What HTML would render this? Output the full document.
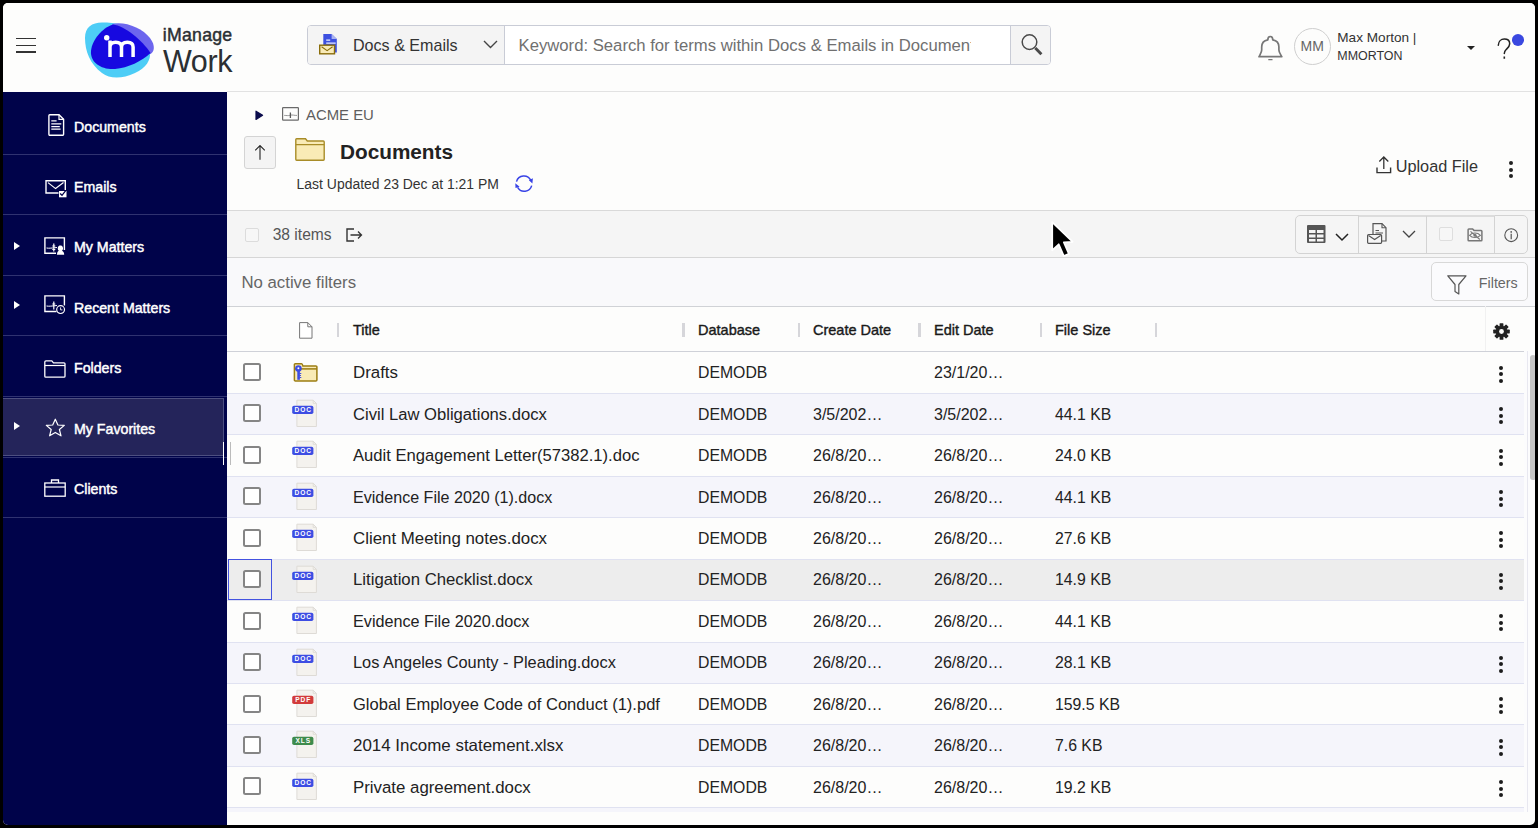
<!DOCTYPE html>
<html><head><meta charset="utf-8">
<style>
*{box-sizing:border-box;margin:0;padding:0}
html,body{width:1538px;height:828px;overflow:hidden;background:#000}
body{font-family:"Liberation Sans",sans-serif;color:#222;position:relative}
#frame{position:absolute;left:3px;top:3px;width:1532px;height:822px;border-radius:5px;overflow:hidden;background:#fdfdfc}
.a{position:absolute}
.t{position:absolute;white-space:nowrap;line-height:1}
svg{position:absolute;overflow:visible}
/* sidebar */
#side{position:absolute;left:0;top:89px;width:224px;height:740px;background:#00034a}
.sep{position:absolute;left:0;width:224px;height:1px;background:#2f3270}
.si{position:absolute;left:71px;color:#fff;font-size:14.2px;-webkit-text-stroke:0.45px #fff;line-height:1}
.tri{position:absolute;left:11px;width:0;height:0;border-top:4.5px solid transparent;border-bottom:4.5px solid transparent;border-left:6px solid #fff}
/* table */
.row{position:absolute;left:224px;width:1297px;height:41.45px}
.row.alt{background:#f5f5fb}
.rb{position:absolute;left:224px;width:1297px;height:1px;background:#e0e2f1}
.cb{position:absolute;left:16px;top:11.6px;width:18px;height:18px;border:2px solid #858585;border-radius:2.5px;background:#fff}
.cell{position:absolute;top:0.8px;line-height:41.45px;white-space:nowrap;font-size:16px;color:#222}
.kb{position:absolute;left:1272px;top:14.3px;width:4px}
.kb i{display:block;width:4px;height:4px;border-radius:50%;background:#1c1c1c;margin-bottom:2.5px}
.hsep{position:absolute;top:17px;width:2.5px;height:14px;background:#d6d6da}
.hh{position:absolute;top:0;line-height:45px;font-weight:bold;font-size:14px;color:#1a1a1a;white-space:nowrap}
</style></head><body>
<div id="frame">
<!-- HEADER -->
<div class="a" style="left:0;top:0;width:1532px;height:89px;background:#fdfdfc"></div>
<div class="a" style="left:224px;top:88px;width:1308px;height:1px;background:#e2e2e2"></div>
<!-- hamburger -->
<div class="a" style="left:12.5px;top:34.8px;width:20.5px;height:1.6px;background:#333"></div>
<div class="a" style="left:12.5px;top:41.5px;width:20.5px;height:1.6px;background:#333"></div>
<div class="a" style="left:12.5px;top:48.2px;width:20.5px;height:1.6px;background:#333"></div>

<!-- logo -->
<svg style="left:77px;top:15px" width="80" height="64" viewBox="0 0 80 64">
 <path d="M22,4.5 C12,4.5 5,9 5,20 C5,33 10,46 22,55 C30,61 42,61 55,55 C66,50 71,42 70,34 L60,14 C50,7 35,4.5 22,4.5 Z" fill="#4dcdf6"/>
 <path d="M32,6 C45,3 62,10 70,20 C76,28 74,34 70.5,36 L45,30 Z" fill="#6d66ee"/>
 <path d="M33,6.5 C22,10 12,22 11,33 C10,45 22,52 35,51 C48,50 62,43 70.5,35 C62,22 45,8 33,6.5 Z" fill="#1709e0"/>
 <circle cx="26.7" cy="19.7" r="2.7" fill="#fff"/>
 <path d="M30,39 V29 C30,25.6 32.4,24.2 35.7,24.2 C39,24.2 41.5,25.6 41.5,29 V39 M41.5,29 C41.5,25.6 44,24.2 47.3,24.2 C50.6,24.2 53.1,25.6 53.1,29 V39 M30,22.6 V39" fill="none" stroke="#fff" stroke-width="3.5"/>
</svg>
<div class="t" style="left:159.8px;top:23.9px;font-size:17.7px;color:#2b2f33;-webkit-text-stroke:0.45px #2b2f33;letter-spacing:0.25px">iManage</div>
<div class="t" style="left:160px;top:43.4px;font-size:30.5px;color:#2b2f33;letter-spacing:-0.4px">Work</div>

<!-- search -->
<div class="a" style="left:304px;top:22px;width:743.5px;height:40px;border:1px solid #c9ccd6;border-radius:4px;background:#fff;overflow:hidden">
  <div class="a" style="left:0;top:0;width:197px;height:40px;background:#f4f4f4;border-right:1px solid #c9ccd6"></div>
  <div class="a" style="left:702.4px;top:0;width:41px;height:40px;background:#f4f4f4;border-left:1px solid #c9ccd6"></div>
</div>
<div class="t" style="left:350px;top:33.7px;font-size:16.1px;color:#333">Docs &amp; Emails</div>
<div class="t" style="left:515.5px;top:35px;font-size:16.7px;color:#707070;width:452px;overflow:hidden">Keyword: Search for terms within Docs &amp; Emails in Documents</div>

<!-- right header -->
<div class="t" style="left:1297.6px;top:35.85px;font-size:14px;color:#666">MM</div>
<div class="a" style="left:1290.9px;top:25.1px;width:37px;height:37px;border-radius:50%;border:1px solid #cfcfcf"></div>
<div class="t" style="left:1334.3px;top:27.5px;font-size:13.6px;color:#333">Max Morton |</div>
<div class="t" style="left:1334.3px;top:47.2px;font-size:12.45px;color:#333">MMORTON</div>
<div class="a" style="left:1464px;top:42.8px;width:0;height:0;border-left:4px solid transparent;border-right:4px solid transparent;border-top:4.2px solid #222"></div>
<svg style="left:1487px;top:27px" width="40" height="32" viewBox="0 0 40 32"><path d="M8.3,15.3 C8.5,11.5 11,9.1 14.3,9.1 C17.5,9.1 19.7,11 19.7,13.8 C19.7,16.5 17.8,18 16.2,19.5 C14.8,20.8 14.3,22 14.3,23.5" fill="none" stroke="#222" stroke-width="1.5" stroke-linecap="round"/><path d="M14.3,26.6 V28.8" stroke="#222" stroke-width="1.6"/></svg>
<div class="a" style="left:1509px;top:31px;width:12px;height:11.5px;border-radius:50%;background:#3a48e0"></div>

<!-- SIDEBAR -->
<div id="side">
  <div class="sep" style="top:62px"></div>
  <div class="sep" style="top:122px"></div>
  <div class="sep" style="top:182.6px"></div>
  <div class="sep" style="top:243px"></div>
  <div class="sep" style="top:303.6px"></div>
  <div class="sep" style="top:364.6px"></div>
  <div class="sep" style="top:425px"></div>
  <div class="a" style="left:0;top:306px;width:221px;height:57.5px;background:#24245a;border:1px solid #4d4f80;border-left:none"></div>
  <div class="si" style="top:27.62px">Documents</div>
  <div class="si" style="top:88.12px">Emails</div>
  <div class="si" style="top:148.12px">My Matters</div>
  <div class="si" style="top:209.12px">Recent Matters</div>
  <div class="si" style="top:269.12px">Folders</div>
  <div class="si" style="top:330.12px">My Favorites</div>
  <div class="si" style="top:390.12px">Clients</div>
  <div class="tri" style="top:149.7px"></div>
  <div class="tri" style="top:209.2px"></div>
  <div class="tri" style="top:330.4px"></div>
</div>

<!-- CONTENT -->
<!-- breadcrumb -->
<svg style="left:251.5px;top:106.5px" width="9" height="11" viewBox="0 0 9 11"><path d="M1,1.2 L7.6,5.3 L1,9.4 Z" fill="#0b0c4c" stroke="#0b0c4c" stroke-width="1.2" stroke-linejoin="round"/></svg>
<svg style="left:278.5px;top:104px" width="18" height="14" viewBox="0 0 18 14"><rect x="0.6" y="0.6" width="15.8" height="12.6" rx="0.6" fill="none" stroke="#6a6a6a" stroke-width="1.2"/><path d="M2.2,8.4 C4.5,8.4 6,9 8.2,8.2 C10.5,7.6 12.5,8.6 15,8.4" fill="none" stroke="#8a8a8a" stroke-width="0.9"/><path d="M8.4,5.4 V11" stroke="#5a5a5a" stroke-width="1.3"/></svg>
<div class="t" style="left:303px;top:105.1px;font-size:14.9px;color:#5e5e5e">ACME EU</div>
<!-- up button -->
<div class="a" style="left:241px;top:133px;width:31.5px;height:32.6px;background:#f4f4f4;border:1px solid #d4d4d4;border-radius:3px"></div>
<svg style="left:249px;top:141px" width="16" height="17" viewBox="0 0 16 17"><path d="M8,1.6 V15.8 M3.2,6.4 L8,1.6 L12.8,6.4" fill="none" stroke="#2a2a2a" stroke-width="1.15"/></svg>
<!-- folder -->
<svg style="left:292px;top:135px" width="30" height="23" viewBox="0 0 30 23"><path d="M0.8,3.5 V1.6 C0.8,1 1.1,0.8 1.6,0.8 H10.5 L12.3,3 H28.3 C28.9,3 29.2,3.3 29.2,3.9 V21.3 C29.2,21.9 28.9,22.2 28.3,22.2 H1.6 C1.1,22.2 0.8,21.9 0.8,21.3 Z" fill="#f9ebb6" stroke="#a88c27" stroke-width="1.4"/><path d="M0.8,6.6 H29.2" stroke="#a88c27" stroke-width="1.3"/></svg>
<div class="t" style="left:337px;top:139.4px;font-size:20.75px;font-weight:bold;color:#222">Documents</div>
<div class="t" style="left:293.6px;top:175.2px;font-size:13.95px;color:#333">Last Updated 23 Dec at 1:21 PM</div>
<!-- refresh -->
<svg style="left:511.6px;top:172px" width="20" height="18" viewBox="0 0 20 18"><path d="M1.5,6.6 A7.7,7.7 0 0 1 15.8,5.3 M16.7,10.6 A7.7,7.7 0 0 1 2.6,12.4" fill="none" stroke="#3843e6" stroke-width="1.5"/><path d="M13.9,5.2 L17.9,3.2 L17.4,8.4 Z M0.3,8.3 L0.5,13 L4.6,11.7 Z" fill="#3843e6"/></svg>
<!-- upload -->
<svg style="left:1373px;top:153px" width="16" height="18" viewBox="0 0 16 18"><path d="M7.8,1 V13 M3.3,5.5 L7.8,1 L12.3,5.5" fill="none" stroke="#333" stroke-width="1.3"/><path d="M1,11.5 V16.6 H14.6 V11.5" fill="none" stroke="#333" stroke-width="1.4"/></svg>
<div class="t" style="left:1392.7px;top:155.2px;font-size:16.3px;color:#333">Upload File</div>
<div class="a" style="left:1506px;top:158px;width:4px"><div style="width:4px;height:4px;border-radius:50%;background:#222;margin-bottom:2.6px"></div><div style="width:4px;height:4px;border-radius:50%;background:#222;margin-bottom:2.6px"></div><div style="width:4px;height:4px;border-radius:50%;background:#222"></div></div>

<!-- toolbar -->
<div class="a" style="left:224px;top:206.5px;width:1308px;height:48px;background:#f5f5f5;border-top:1px solid #d9d9d9;border-bottom:1px solid #d6d6d6"></div>
<div class="a" style="left:224px;top:254.5px;width:1308px;height:49px;background:#f9f9fb;border-bottom:1px solid #d0d2d6"></div>
<div class="a" style="left:242.3px;top:225px;width:13.6px;height:13.6px;border:1px solid #dcdcdc;border-radius:2px;background:#f7f7f7"></div>
<div class="t" style="left:269.7px;top:223.8px;font-size:15.6px;color:#555">38 items</div>
<svg style="left:342.6px;top:225px" width="17" height="14" viewBox="0 0 17 14"><path d="M8,1 H1 V13 H8" fill="none" stroke="#333" stroke-width="1.4"/><path d="M4.5,7 H15.5 M12,3.5 L15.5,7 L12,10.5" fill="none" stroke="#333" stroke-width="1.3"/></svg>
<!-- button group -->
<div class="a" style="left:1292.4px;top:212.4px;width:233px;height:38.2px;border:1px solid #d3d3d3;border-radius:5px"></div>
<div class="a" style="left:1355.6px;top:211.8px;width:136px;height:2px;background:#dcdcdc"></div><div class="a" style="left:1354.6px;top:213px;width:1px;height:37px;background:#d3d3d3"></div>
<div class="a" style="left:1422.7px;top:213px;width:1px;height:37px;background:#d3d3d3"></div>
<div class="a" style="left:1491.4px;top:213px;width:1px;height:37px;background:#d3d3d3"></div>
<svg style="left:1303.8px;top:222px" width="19" height="19" viewBox="0 0 19 19"><rect x="0" y="0" width="18.5" height="18" rx="1" fill="#555"/><rect x="2" y="5" width="6.5" height="3" fill="#f5f5f5"/><rect x="10" y="5" width="6.5" height="3" fill="#f5f5f5"/><rect x="2" y="9.5" width="6.5" height="3" fill="#f5f5f5"/><rect x="10" y="9.5" width="6.5" height="3" fill="#f5f5f5"/><rect x="2" y="14" width="6.5" height="2.5" fill="#f5f5f5"/><rect x="10" y="14" width="6.5" height="2.5" fill="#f5f5f5"/></svg>
<svg style="left:1331.9px;top:229.7px" width="14" height="8" viewBox="0 0 14 8"><path d="M1,1 L7,7 L13,1" fill="none" stroke="#222" stroke-width="1.5"/></svg>
<svg style="left:1363.9px;top:219.6px" width="20" height="21" viewBox="0 0 20 21"><path d="M6,12 V0.7 H15 L19,4.7 V18 H15" fill="none" stroke="#555" stroke-width="1.2"/><path d="M15,0.7 V4.7 H19" fill="none" stroke="#555" stroke-width="1.1"/><path d="M8.5,7.5 H12 M8.5,10 H16" stroke="#555" stroke-width="1.1"/><rect x="0.6" y="11.5" width="14" height="8.8" rx="1" fill="#f5f5f5" stroke="#555" stroke-width="1.2"/><path d="M1.5,12.5 L7.6,16.5 L13.7,12.5" fill="none" stroke="#555" stroke-width="1.1"/></svg>
<svg style="left:1398.6px;top:227px" width="14" height="8" viewBox="0 0 14 8"><path d="M1,1 L7,7 L13,1" fill="none" stroke="#444" stroke-width="1.3"/></svg>
<div class="a" style="left:1436.4px;top:223.8px;width:13.4px;height:13.8px;border:1px solid #dedede;border-radius:2px;background:#f7f7f7"></div>
<svg style="left:1463.6px;top:224.6px" width="16" height="14" viewBox="0 0 16 14"><path d="M1.9,12.7 C1.4,12.7 1.1,12.4 1.1,11.9 V1.8 C1.1,1.3 1.4,1 1.9,1 H5.6 L7,2.4 H14.1 C14.6,2.4 14.9,2.7 14.9,3.2 V11.9 C14.9,12.4 14.6,12.7 14.1,12.7 Z" fill="none" stroke="#777" stroke-width="1.5"/><path d="M2.6,7.3 C5.2,4.3 10.6,4.3 13.4,7.3 C10.6,10.2 5.2,10.2 2.6,7.3 Z" fill="none" stroke="#777" stroke-width="1.1"/><circle cx="8" cy="7.3" r="1.5" fill="#777"/><path d="M3.5,3.3 L12.8,11.5" stroke="#777" stroke-width="1.1"/></svg>
<svg style="left:1501px;top:224.5px" width="15" height="15" viewBox="0 0 15 15"><circle cx="7.2" cy="7.2" r="6.4" fill="none" stroke="#555" stroke-width="1.1"/><circle cx="7.2" cy="3.9" r="0.85" fill="#555"/><path d="M7.2,5.8 V11.2" stroke="#555" stroke-width="1.2"/></svg>
<!-- filter bar -->
<div class="t" style="left:238.4px;top:271.6px;font-size:16.8px;color:#666">No active filters</div>
<div class="a" style="left:1427.5px;top:259.4px;width:97px;height:38.2px;border:1px solid #d8d8d8;border-radius:5px;background:#fbfbfd"></div>
<svg style="left:1444px;top:271.6px" width="20" height="20" viewBox="0 0 20 20"><path d="M0.8,0.8 H19 L11.8,9.5 V19 L8,16.5 V9.5 Z" fill="none" stroke="#555" stroke-width="1.2" stroke-linejoin="round"/></svg>
<div class="t" style="left:1475.8px;top:273px;font-size:14.3px;color:#666">Filters</div>

<!-- table header -->
<svg style="left:296px;top:318.5px" width="14" height="17" viewBox="0 0 14 17"><path d="M0.6,0.6 H8.8 L13,4.8 V16.2 H0.6 Z" fill="#fff" stroke="#777" stroke-width="1"/><path d="M8.8,0.6 V4.8 H13" fill="none" stroke="#777" stroke-width="1"/></svg>
<div class="hsep" style="left:333.8px;top:320px"></div>
<div class="hsep" style="left:679.2px;top:320px"></div>
<div class="hsep" style="left:794.8px;top:320px"></div>
<div class="hsep" style="left:915.2px;top:320px"></div>
<div class="hsep" style="left:1036.5px;top:320px"></div>
<div class="hsep" style="left:1151.5px;top:320px"></div>
<div class="t" style="left:350px;top:320.1px;font-size:14.5px;color:#1a1a1a;-webkit-text-stroke:0.4px #1a1a1a">Title</div>
<div class="t" style="left:695px;top:320.1px;font-size:14.5px;color:#1a1a1a;-webkit-text-stroke:0.4px #1a1a1a">Database</div>
<div class="t" style="left:810px;top:320.1px;font-size:14.5px;color:#1a1a1a;-webkit-text-stroke:0.4px #1a1a1a">Create Date</div>
<div class="t" style="left:931px;top:320.1px;font-size:14.5px;color:#1a1a1a;-webkit-text-stroke:0.4px #1a1a1a">Edit Date</div>
<div class="t" style="left:1052px;top:320.1px;font-size:14.5px;color:#1a1a1a;-webkit-text-stroke:0.4px #1a1a1a">File Size</div>
<div class="a" style="left:1482.3px;top:303px;width:1px;height:45px;background:#f1f1f1"></div>
<svg style="left:1490px;top:319.7px" width="17" height="17" viewBox="-8.5 -8.5 17 17"><g fill="#222"><circle r="5.8"/><rect x="-1.9" y="-8.3" width="3.8" height="16.6" rx="0.6"/><rect x="-1.9" y="-8.3" width="3.8" height="16.6" rx="0.6" transform="rotate(45)"/><rect x="-1.9" y="-8.3" width="3.8" height="16.6" rx="0.6" transform="rotate(90)"/><rect x="-1.9" y="-8.3" width="3.8" height="16.6" rx="0.6" transform="rotate(135)"/></g><circle r="2.4" fill="#fdfdfc"/></svg>
<div class="a" style="left:224px;top:347.9px;width:1308px;height:1px;background:#cfd1d8"></div>

<div class="row" style="top:348.40px;">
<div class="cb"></div>
<svg style="left:65.8px;top:12px" width="25" height="19" viewBox="0 0 25 19"><path d="M1.4,16.9 V1.6 C1.4,1 1.7,0.7 2.3,0.7 H8.6 C9.2,0.7 9.5,1.2 9.9,2.9 H22.9 C23.5,2.9 23.9,3.2 23.9,3.8 V16.9 C23.9,17.5 23.5,17.9 22.9,17.9 H2.3 C1.7,17.9 1.4,17.5 1.4,16.9 Z" fill="#f9ebb6" stroke="#9c7d12" stroke-width="1.5"/><path d="M1.4,5.9 H23.9" stroke="#9c7d12" stroke-width="1.5"/><circle cx="5.4" cy="5.6" r="3.3" fill="#3d4de3"/><circle cx="5.4" cy="5.3" r="1" fill="#fff"/><path d="M5.6,8 V16.8" stroke="#3d4de3" stroke-width="2.6"/><path d="M6.5,10.5 H8.3 M6.5,12.5 H8 M6.5,14.5 H8.3" stroke="#3d4de3" stroke-width="1.1"/></svg>
<div class="cell" style="left:126px;font-size:16.87px">Drafts</div>
<div class="cell" style="left:471px;font-size:15.8px">DEMODB</div>
<div class="cell" style="left:707px;font-size:16px">23/1/20…</div>
<div class="kb"><i></i><i></i><i></i></div>
</div>
<div class="row" style="top:389.85px;background:#f5f5fb">
<div class="cb"></div>
<svg style="left:64.8px;top:7px" width="26" height="27" viewBox="0 0 26 27"><path d="M4.9,0.2 H21.2 L24.4,3.4 V26.5 H4.9 Z" fill="#f4f2ee" stroke="#dedbd6" stroke-width="1"/><path d="M21.2,0.2 V3.4 H24.4" fill="none" stroke="#dedbd6" stroke-width="0.9"/><rect x="0.2" y="5.7" width="21.2" height="8.4" rx="1.8" fill="#3d4de3"/><text x="11.2" y="12.4" font-family="Liberation Sans" font-weight="bold" font-size="6.6" fill="#fff" text-anchor="middle" letter-spacing="0.9">DOC</text></svg>
<div class="cell" style="left:126px;font-size:16.62px">Civil Law Obligations.docx</div>
<div class="cell" style="left:471px;font-size:15.8px">DEMODB</div>
<div class="cell" style="left:586px;font-size:16px">3/5/202…</div>
<div class="cell" style="left:707px;font-size:16px">3/5/202…</div>
<div class="cell" style="left:828px;font-size:15.8px">44.1 KB</div>
<div class="kb"><i></i><i></i><i></i></div>
</div>
<div class="row" style="top:431.30px;">
<div class="cb"></div>
<svg style="left:64.8px;top:7px" width="26" height="27" viewBox="0 0 26 27"><path d="M4.9,0.2 H21.2 L24.4,3.4 V26.5 H4.9 Z" fill="#f4f2ee" stroke="#dedbd6" stroke-width="1"/><path d="M21.2,0.2 V3.4 H24.4" fill="none" stroke="#dedbd6" stroke-width="0.9"/><rect x="0.2" y="5.7" width="21.2" height="8.4" rx="1.8" fill="#3d4de3"/><text x="11.2" y="12.4" font-family="Liberation Sans" font-weight="bold" font-size="6.6" fill="#fff" text-anchor="middle" letter-spacing="0.9">DOC</text></svg>
<div class="cell" style="left:126px;font-size:16.64px">Audit Engagement Letter(57382.1).doc</div>
<div class="cell" style="left:471px;font-size:15.8px">DEMODB</div>
<div class="cell" style="left:586px;font-size:16px">26/8/20…</div>
<div class="cell" style="left:707px;font-size:16px">26/8/20…</div>
<div class="cell" style="left:828px;font-size:15.8px">24.0 KB</div>
<div class="kb"><i></i><i></i><i></i></div>
</div>
<div class="row" style="top:472.75px;background:#f5f5fb">
<div class="cb"></div>
<svg style="left:64.8px;top:7px" width="26" height="27" viewBox="0 0 26 27"><path d="M4.9,0.2 H21.2 L24.4,3.4 V26.5 H4.9 Z" fill="#f4f2ee" stroke="#dedbd6" stroke-width="1"/><path d="M21.2,0.2 V3.4 H24.4" fill="none" stroke="#dedbd6" stroke-width="0.9"/><rect x="0.2" y="5.7" width="21.2" height="8.4" rx="1.8" fill="#3d4de3"/><text x="11.2" y="12.4" font-family="Liberation Sans" font-weight="bold" font-size="6.6" fill="#fff" text-anchor="middle" letter-spacing="0.9">DOC</text></svg>
<div class="cell" style="left:126px;font-size:16.09px">Evidence File 2020 (1).docx</div>
<div class="cell" style="left:471px;font-size:15.8px">DEMODB</div>
<div class="cell" style="left:586px;font-size:16px">26/8/20…</div>
<div class="cell" style="left:707px;font-size:16px">26/8/20…</div>
<div class="cell" style="left:828px;font-size:15.8px">44.1 KB</div>
<div class="kb"><i></i><i></i><i></i></div>
</div>
<div class="row" style="top:514.20px;">
<div class="cb"></div>
<svg style="left:64.8px;top:7px" width="26" height="27" viewBox="0 0 26 27"><path d="M4.9,0.2 H21.2 L24.4,3.4 V26.5 H4.9 Z" fill="#f4f2ee" stroke="#dedbd6" stroke-width="1"/><path d="M21.2,0.2 V3.4 H24.4" fill="none" stroke="#dedbd6" stroke-width="0.9"/><rect x="0.2" y="5.7" width="21.2" height="8.4" rx="1.8" fill="#3d4de3"/><text x="11.2" y="12.4" font-family="Liberation Sans" font-weight="bold" font-size="6.6" fill="#fff" text-anchor="middle" letter-spacing="0.9">DOC</text></svg>
<div class="cell" style="left:126px;font-size:16.86px">Client Meeting notes.docx</div>
<div class="cell" style="left:471px;font-size:15.8px">DEMODB</div>
<div class="cell" style="left:586px;font-size:16px">26/8/20…</div>
<div class="cell" style="left:707px;font-size:16px">26/8/20…</div>
<div class="cell" style="left:828px;font-size:15.8px">27.6 KB</div>
<div class="kb"><i></i><i></i><i></i></div>
</div>
<div class="row" style="top:555.65px;background:#ededed">
<div class="cb"></div>
<svg style="left:64.8px;top:7px" width="26" height="27" viewBox="0 0 26 27"><path d="M4.9,0.2 H21.2 L24.4,3.4 V26.5 H4.9 Z" fill="#f4f2ee" stroke="#dedbd6" stroke-width="1"/><path d="M21.2,0.2 V3.4 H24.4" fill="none" stroke="#dedbd6" stroke-width="0.9"/><rect x="0.2" y="5.7" width="21.2" height="8.4" rx="1.8" fill="#3d4de3"/><text x="11.2" y="12.4" font-family="Liberation Sans" font-weight="bold" font-size="6.6" fill="#fff" text-anchor="middle" letter-spacing="0.9">DOC</text></svg>
<div class="cell" style="left:126px;font-size:16.74px">Litigation Checklist.docx</div>
<div class="cell" style="left:471px;font-size:15.8px">DEMODB</div>
<div class="cell" style="left:586px;font-size:16px">26/8/20…</div>
<div class="cell" style="left:707px;font-size:16px">26/8/20…</div>
<div class="cell" style="left:828px;font-size:15.8px">14.9 KB</div>
<div class="kb"><i></i><i></i><i></i></div>
</div>
<div class="row" style="top:597.10px;">
<div class="cb"></div>
<svg style="left:64.8px;top:7px" width="26" height="27" viewBox="0 0 26 27"><path d="M4.9,0.2 H21.2 L24.4,3.4 V26.5 H4.9 Z" fill="#f4f2ee" stroke="#dedbd6" stroke-width="1"/><path d="M21.2,0.2 V3.4 H24.4" fill="none" stroke="#dedbd6" stroke-width="0.9"/><rect x="0.2" y="5.7" width="21.2" height="8.4" rx="1.8" fill="#3d4de3"/><text x="11.2" y="12.4" font-family="Liberation Sans" font-weight="bold" font-size="6.6" fill="#fff" text-anchor="middle" letter-spacing="0.9">DOC</text></svg>
<div class="cell" style="left:126px;font-size:16.2px">Evidence File 2020.docx</div>
<div class="cell" style="left:471px;font-size:15.8px">DEMODB</div>
<div class="cell" style="left:586px;font-size:16px">26/8/20…</div>
<div class="cell" style="left:707px;font-size:16px">26/8/20…</div>
<div class="cell" style="left:828px;font-size:15.8px">44.1 KB</div>
<div class="kb"><i></i><i></i><i></i></div>
</div>
<div class="row" style="top:638.55px;background:#f5f5fb">
<div class="cb"></div>
<svg style="left:64.8px;top:7px" width="26" height="27" viewBox="0 0 26 27"><path d="M4.9,0.2 H21.2 L24.4,3.4 V26.5 H4.9 Z" fill="#f4f2ee" stroke="#dedbd6" stroke-width="1"/><path d="M21.2,0.2 V3.4 H24.4" fill="none" stroke="#dedbd6" stroke-width="0.9"/><rect x="0.2" y="5.7" width="21.2" height="8.4" rx="1.8" fill="#3d4de3"/><text x="11.2" y="12.4" font-family="Liberation Sans" font-weight="bold" font-size="6.6" fill="#fff" text-anchor="middle" letter-spacing="0.9">DOC</text></svg>
<div class="cell" style="left:126px;font-size:16.38px">Los Angeles County - Pleading.docx</div>
<div class="cell" style="left:471px;font-size:15.8px">DEMODB</div>
<div class="cell" style="left:586px;font-size:16px">26/8/20…</div>
<div class="cell" style="left:707px;font-size:16px">26/8/20…</div>
<div class="cell" style="left:828px;font-size:15.8px">28.1 KB</div>
<div class="kb"><i></i><i></i><i></i></div>
</div>
<div class="row" style="top:680.00px;">
<div class="cb"></div>
<svg style="left:64.8px;top:7px" width="26" height="27" viewBox="0 0 26 27"><path d="M4.9,0.2 H21.2 L24.4,3.4 V26.5 H4.9 Z" fill="#f4f2ee" stroke="#dedbd6" stroke-width="1"/><path d="M21.2,0.2 V3.4 H24.4" fill="none" stroke="#dedbd6" stroke-width="0.9"/><rect x="0.2" y="5.7" width="21.2" height="8.4" rx="1.8" fill="#d23b3b"/><text x="11.2" y="12.4" font-family="Liberation Sans" font-weight="bold" font-size="6.6" fill="#fff" text-anchor="middle" letter-spacing="0.9">PDF</text></svg>
<div class="cell" style="left:126px;font-size:16.54px">Global Employee Code of Conduct (1).pdf</div>
<div class="cell" style="left:471px;font-size:15.8px">DEMODB</div>
<div class="cell" style="left:586px;font-size:16px">26/8/20…</div>
<div class="cell" style="left:707px;font-size:16px">26/8/20…</div>
<div class="cell" style="left:828px;font-size:15.8px">159.5 KB</div>
<div class="kb"><i></i><i></i><i></i></div>
</div>
<div class="row" style="top:721.45px;background:#f5f5fb">
<div class="cb"></div>
<svg style="left:64.8px;top:7px" width="26" height="27" viewBox="0 0 26 27"><path d="M4.9,0.2 H21.2 L24.4,3.4 V26.5 H4.9 Z" fill="#f4f2ee" stroke="#dedbd6" stroke-width="1"/><path d="M21.2,0.2 V3.4 H24.4" fill="none" stroke="#dedbd6" stroke-width="0.9"/><rect x="0.2" y="5.7" width="21.2" height="8.4" rx="1.8" fill="#3e8b4c"/><text x="11.2" y="12.4" font-family="Liberation Sans" font-weight="bold" font-size="6.6" fill="#fff" text-anchor="middle" letter-spacing="0.9">XLS</text></svg>
<div class="cell" style="left:126px;font-size:16.92px">2014 Income statement.xlsx</div>
<div class="cell" style="left:471px;font-size:15.8px">DEMODB</div>
<div class="cell" style="left:586px;font-size:16px">26/8/20…</div>
<div class="cell" style="left:707px;font-size:16px">26/8/20…</div>
<div class="cell" style="left:828px;font-size:15.8px">7.6 KB</div>
<div class="kb"><i></i><i></i><i></i></div>
</div>
<div class="row" style="top:762.90px;">
<div class="cb"></div>
<svg style="left:64.8px;top:7px" width="26" height="27" viewBox="0 0 26 27"><path d="M4.9,0.2 H21.2 L24.4,3.4 V26.5 H4.9 Z" fill="#f4f2ee" stroke="#dedbd6" stroke-width="1"/><path d="M21.2,0.2 V3.4 H24.4" fill="none" stroke="#dedbd6" stroke-width="0.9"/><rect x="0.2" y="5.7" width="21.2" height="8.4" rx="1.8" fill="#3d4de3"/><text x="11.2" y="12.4" font-family="Liberation Sans" font-weight="bold" font-size="6.6" fill="#fff" text-anchor="middle" letter-spacing="0.9">DOC</text></svg>
<div class="cell" style="left:126px;font-size:16.84px">Private agreement.docx</div>
<div class="cell" style="left:471px;font-size:15.8px">DEMODB</div>
<div class="cell" style="left:586px;font-size:16px">26/8/20…</div>
<div class="cell" style="left:707px;font-size:16px">26/8/20…</div>
<div class="cell" style="left:828px;font-size:15.8px">19.2 KB</div>
<div class="kb"><i></i><i></i><i></i></div>
</div>
<div class="row" style="top:804.35px;height:5px;background:#f5f5fb"></div>
<div class="rb" style="top:389.85px"></div>
<div class="rb" style="top:431.30px"></div>
<div class="rb" style="top:472.75px"></div>
<div class="rb" style="top:514.20px"></div>
<div class="rb" style="top:555.65px"></div>
<div class="rb" style="top:597.10px"></div>
<div class="rb" style="top:638.55px"></div>
<div class="rb" style="top:680.00px"></div>
<div class="rb" style="top:721.45px"></div>
<div class="rb" style="top:762.90px"></div>
<div class="rb" style="top:804.35px"></div>
<!-- scrollbar -->
<div class="a" style="left:1521px;top:348.4px;width:11px;height:461px;background:#fcfcfd"></div><div class="a" style="left:1523.8px;top:348.4px;width:1px;height:461px;background:#e8e8f0"></div>
<div class="a" style="left:1526.5px;top:351.5px;width:6px;height:125px;border-radius:3px;background:#c6c6c6"></div>
<!-- litigation focus -->
<div class="a" style="left:225px;top:555.7px;width:43.6px;height:41.5px;border:1px solid #4352e0"></div>
<!-- I-beam cursor -->
<div class="a" style="left:220px;top:439px;width:1.2px;height:23px;background:#fff"></div>
<div class="a" style="left:227.2px;top:439px;width:1px;height:23px;background:#bbb"></div>
<!-- mouse pointer -->
<svg style="left:1047.3px;top:216.3px" width="24" height="40" viewBox="0 0 24 40"><path d="M2.2,3.2 V31.3 L8.7,25.3 L13.8,37 L18.9,34.8 L13.9,23.3 L22.7,22.8 Z" fill="#000" stroke="#fff" stroke-width="1.8" stroke-linejoin="round"/></svg>

<!-- header icons -->
<svg style="left:315.8px;top:31.2px" width="20" height="23" viewBox="0 0 20 23"><path d="M4.3,0 H12.6 L17.8,5 V18.5 H4.3 Z" fill="#3d50e0"/><path d="M12.6,0 V5 H17.8" fill="#a9b3f0"/><path d="M7.2,6.1 H11.2 M7.2,9.2 H16.7" stroke="#e8ebff" stroke-width="1.2"/><rect x="0.7" y="11.2" width="14.8" height="8.6" fill="#f8eab8" stroke="#8a6d0a" stroke-width="1.4"/><path d="M2.6,12.8 L8.1,16.6 L13.6,12.8" fill="none" stroke="#8a6d0a" stroke-width="1.1"/></svg>
<svg style="left:480px;top:37px" width="15" height="9" viewBox="0 0 15 9"><path d="M1,1 L7.5,7.5 L14,1" fill="none" stroke="#444" stroke-width="1.4"/></svg>
<svg style="left:1014px;top:28px" width="30" height="30" viewBox="0 0 30 30"><circle cx="12.5" cy="11.1" r="7.3" fill="none" stroke="#4a4a4a" stroke-width="1.5"/><path d="M18.3,17 L24.4,23.3" stroke="#4a4a4a" stroke-width="2.9"/></svg>
<svg style="left:1252px;top:30px" width="32" height="30" viewBox="0 0 32 30"><path d="M4,23.7 C5,21.5 6.7,19.5 6.7,17 V14 C6.7,10 9,7.6 12.8,6.9 C12.8,4.6 13.8,3.5 15.3,3.5 C16.8,3.5 17.8,4.6 17.8,6.9 C21.6,7.6 23.9,10 23.9,14 V17 C23.9,19.5 25.6,21.5 26.8,23.7 Z" fill="none" stroke="#777" stroke-width="1.7" stroke-linejoin="round"/><path d="M13.3,26.6 H17.5" stroke="#777" stroke-width="1.4"/></svg>

<!-- sidebar icons -->
<svg style="left:44.6px;top:110.5px" width="17" height="22" viewBox="0 0 17 22"><path d="M1.7,0.8 H11 L15.6,5.3 V20.3 C15.6,20.8 15.3,21.2 14.8,21.2 H1.7 C1.2,21.2 0.9,20.8 0.9,20.3 V1.7 C0.9,1.2 1.2,0.8 1.7,0.8 Z" fill="none" stroke="#fff" stroke-width="1.4"/><path d="M11,0.8 V5.3 H15.6" fill="none" stroke="#fff" stroke-width="1.2"/><path d="M3.3,6.8 H8.6 M3.3,9.9 H13.3 M3.3,12.6 H11.8 M3.3,15.2 H12.6" stroke="#fff" stroke-width="1.3"/></svg>
<svg style="left:42px;top:176.5px" width="22" height="17" viewBox="0 0 22 17"><path d="M13.5,13 H1 V0.7 H20.3 V10" fill="none" stroke="#fff" stroke-width="1.4"/><path d="M3,2.6 L10.6,8.6 L18.5,2.6" fill="none" stroke="#fff" stroke-width="1.2"/><rect x="14" y="11" width="7.5" height="6.3" fill="#fff"/><path d="M15.1,13.5 L17,15.3 L20.7,10.7" fill="none" stroke="#00034a" stroke-width="1.3"/></svg>
<svg style="left:41px;top:233.5px" width="22" height="19" viewBox="0 0 22 19"><path d="M12,16.3 H0.9 V0.9 H20.4 V13" fill="none" stroke="#fff" stroke-width="1.4"/><path d="M2.5,11 C5,11.5 8,11 13,10.5" fill="none" stroke="#fff" stroke-width="1"/><path d="M9.8,6.5 V14.5 M8.3,9 H11.3 M8.3,12.5 H11.3" stroke="#fff" stroke-width="1.2"/><path d="M13,17.8 C13,15.2 13.8,14.2 14.8,13.8 C13.8,13 13.6,11.6 13.9,10.5 C14.3,9.2 15.2,8.6 16.4,8.6 C17.6,8.6 18.5,9.2 18.9,10.5 C19.2,11.6 19,13 18,13.8 C19,14.2 20.2,15.2 20.2,17.8 Z" fill="#fff"/></svg>
<svg style="left:41px;top:292px" width="23" height="21" viewBox="0 0 23 21"><path d="M12.5,16.5 H0.9 V0.9 H20.4 V10.5" fill="none" stroke="#fff" stroke-width="1.4"/><path d="M2.5,11 C5,11.5 8,11 13,10.5" fill="none" stroke="#fff" stroke-width="1"/><path d="M9.8,6.5 V14.5 M8.3,9 H11.3" stroke="#fff" stroke-width="1.2"/><circle cx="16.6" cy="14.6" r="3.9" fill="#00034a" stroke="#fff" stroke-width="1.2"/><path d="M16.6,12.4 V14.9 H18.4" fill="none" stroke="#fff" stroke-width="0.9"/></svg>
<svg style="left:41px;top:357px" width="22" height="18" viewBox="0 0 22 18"><path d="M0.8,2 C0.8,1.2 1.2,0.8 2,0.8 H7.8 L9.5,2.8 H20 C20.6,2.8 21,3.2 21,3.8 V16.2 C21,16.8 20.6,17.2 20,17.2 H1.8 C1.2,17.2 0.8,16.8 0.8,16.2 Z" fill="none" stroke="#fff" stroke-width="1.3"/><path d="M0.8,5.5 H21" stroke="#fff" stroke-width="1.2"/></svg>
<svg style="left:41.6px;top:414.7px" width="21" height="20" viewBox="0 0 21 20"><path d="M10.3,1.2 L12.9,7 L19.3,7.4 L14.4,11.5 L16,17.8 L10.3,14.4 L4.6,17.8 L6.2,11.5 L1.3,7.4 L7.7,7 Z" fill="none" stroke="#fff" stroke-width="1.2" stroke-linejoin="round"/></svg>
<svg style="left:41px;top:476px" width="22" height="18" viewBox="0 0 22 18"><rect x="0.8" y="4" width="20.4" height="13.2" fill="none" stroke="#fff" stroke-width="1.3"/><path d="M7.5,4 V1 H14.5 V4" fill="none" stroke="#fff" stroke-width="1.3"/><path d="M0.8,8 H21.2" stroke="#fff" stroke-width="1.2"/></svg>

</div>
</body></html>
